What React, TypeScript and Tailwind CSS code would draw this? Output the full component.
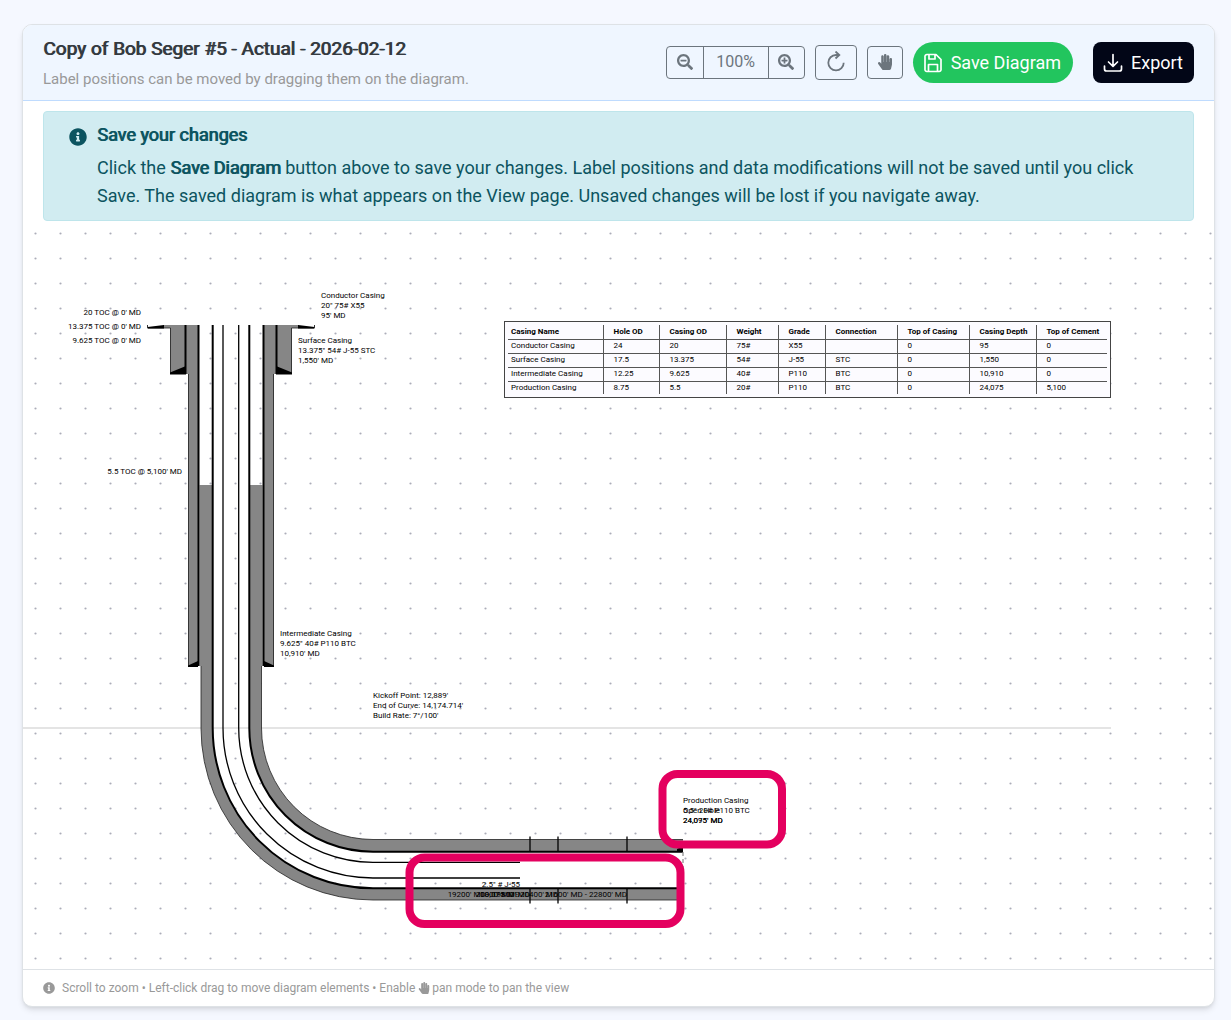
import { FaHandPaper, FaInfoCircle, FaSearchMinus, FaSearchPlus } from 'react-icons/fa';

const columns = [
  { title: 'Casing Name', width: 'w-[95px]' },
  { title: 'Hole OD', width: 'w-[56px]' },
  { title: 'Casing OD', width: 'w-[67px]' },
  { title: 'Weight', width: 'w-[52px]' },
  { title: 'Grade', width: 'w-[47px]' },
  { title: 'Connection', width: 'w-[72px]' },
  { title: 'Top of Casing', width: 'w-[72px]' },
  { title: 'Casing Depth', width: 'w-[67px]' },
  { title: 'Top of Cement', width: 'w-[71px]' },
];

const casings = [
  ['Conductor Casing', '24', '20', '75#', 'X55', '', '0', '95', '0'],
  ['Surface Casing', '17.5', '13.375', '54#', 'J-55', 'STC', '0', '1,550', '0'],
  ['Intermediate Casing', '12.25', '9.625', '40#', 'P110', 'BTC', '0', '10,910', '0'],
  ['Production Casing', '8.75', '5.5', '20#', 'P110', 'BTC', '0', '24,075', '5,100'],
];

type Label = { x: number; y: number; end?: boolean; lines: string[] };

const labels: Label[] = [
  { x: 118, y: 94, end: true, lines: ["20 TOC @ 0' MD"] },
  { x: 118, y: 108, end: true, lines: ["13.375 TOC @ 0' MD"] },
  { x: 118, y: 122, end: true, lines: ["9.625 TOC @ 0' MD"] },
  { x: 159, y: 253, end: true, lines: ["5.5 TOC @ 5,100' MD"] },
  { x: 298, y: 77, lines: ['Conductor Casing', '20" 75# X55', "95' MD"] },
  { x: 275, y: 122, lines: ['Surface Casing', '13.375" 54# J-55 STC', "1,550' MD"] },
  { x: 257, y: 415, lines: ['Intermediate Casing', '9.625" 40# P110 BTC', "10,910' MD"] },
  { x: 350, y: 477, lines: ["Kickoff Point: 12,889'", "End of Curve: 14,174.714'", "Build Rate: 7°/100'"] },
  { x: 660, y: 582, lines: ['Production Casing', '5.5" 20# P110 BTC', "24,075' MD"] },
  { x: 660, y: 592, lines: ['Open Hole', "24,095' MD"] },
  { x: 497, y: 666, end: true, lines: ['2.5" # J-55', "18,075' MD"] },
  { x: 507, y: 676, end: true, lines: ["19200' MD - 19800' MD"] },
  { x: 535, y: 676, end: true, lines: ["20000' MD - 20400' MD"] },
  { x: 604, y: 676, end: true, lines: ["21600' MD - 22800' MD"] },
];

function DiagramLabel({ x, y, end, lines }: Label) {
  return (
    <text textAnchor={end ? 'end' : 'start'} className="cursor-move fill-black text-[8px]">
      {lines.map((line, i) => (
        <tspan key={line} x={x} y={y + i * 10}>{line}</tspan>
      ))}
    </text>
  );
}

function WellDrawing() {
  return (
    <svg className="block h-[748px] w-full" role="img" aria-label="Wellbore diagram">
      <defs>
        <pattern id="grid" width="25" height="25" patternUnits="userSpaceOnUse">
          <circle cx="12.5" cy="12.5" r="1.1" fill="#acadb9" />
        </pattern>
      </defs>
      <rect width="100%" height="100%" fill="url(#grid)" />

      {/* Kickoff depth */}
      <path d="M0 507H1088" stroke="#e4e4e4" strokeWidth="2" />

      {/* Cement */}
      <g fill="#868686">
        <path d="M140 104H163V107H140ZM253 104H276V107H253Z" />
        <path d="M147 104V153H163V104ZM269 104V153H253V104Z" />
        <path d="M163 104V153H165V445H175V104ZM253 104V153H251V445H241V104Z" />
        <path d="M176.500 264H189.500V507A160.500 160.500 0 0 0 350 667.500H660V679H350A172 172 0 0 1 178 507V445H176.500Z" />
        <path d="M239.500 264H226.500V507A123.500 123.500 0 0 0 350 630.500H660V618.500H350A111.500 111.500 0 0 1 238.500 507V445H239.500Z" />
      </g>

      {/* Hole walls */}
      <g fill="none" stroke="#222" strokeWidth=".8">
        <path d="M125 107H147.500V153M291 107H268.500V153M165.500 153V445M250.500 153V445" />
        <path d="M178 445V507A172 172 0 0 0 350 679H660M238.500 445V507A111.500 111.500 0 0 0 350 618.500H660" />
      </g>

      {/* Casing strings */}
      <g fill="none" stroke="#000" strokeWidth="2">
        <path d="M162.500 104V153M253.500 104V153" />
        <path d="M175.500 104V445M240.500 104V445" />
        <path d="M189.700 104V507A160.300 160.300 0 0 0 350 667.300H660" />
        <path d="M226.300 104V507A123.700 123.700 0 0 0 350 630.700H660" />
        <path d="M200 104V507A150 150 0 0 0 350 657H497M215.700 104V507A134.300 134.300 0 0 0 350 641.300H497" strokeWidth="1.3" />
        <path d="M507 615.500V631M535 615.500V631M604 615.500V631M507 667V682.500M535 667V682.500M604 667V682.500" strokeWidth="1.3" />
        <path d="M660 631V667" stroke="#888" strokeWidth="1.2" strokeDasharray="4 3" />
      </g>

      {/* Casing shoes */}
      <path d="M124.500 107.500V106L141 104V107.500ZM291.500 107.500V106L275 104V107.500ZM147 153V151.500L163 145V153.500H147ZM269 153V151.500L253 145V153.500H269ZM165 446V444.500L175 440V446ZM251 446V444.500L241 440V446ZM654 631V628L660 625V631Z" />
      <path d="M124.500 104V107M291.500 104V107" stroke="#333" />

      {labels.map((label) => (
        <DiagramLabel key={label.lines.join()} {...label} />
      ))}

      {/* Markup */}
      <g fill="none" stroke="#e4005f" strokeWidth="8">
        <rect x="639.500" y="553" width="119.500" height="70.500" rx="15" />
        <rect x="386.500" y="636.500" width="271" height="66.500" rx="15" />
      </g>
    </svg>
  );
}

function CasingTable() {
  return (
    <div className="absolute top-[100px] left-[481px] border border-[#444] bg-[#fcfbff] p-[3px]">
      <table className="w-[599px] table-fixed border-collapse text-left text-[8px] leading-[10px] text-black">
        <thead>
          <tr className="h-[14px] border-b border-[#555]">
            {columns.map((col) => (
              <th key={col.title} className={`${col.width} border-l border-[#555] p-0 pt-px pl-[10px] font-bold whitespace-nowrap first:border-l-0 first:pl-[3px]`}>
                {col.title}
              </th>
            ))}
          </tr>
        </thead>
        <tbody>
          {casings.map((row) => (
            <tr key={row[0]} className="h-[14px] border-b border-[#555] last:h-[13px] last:border-b-0">
              {row.map((cell, i) => (
                <td key={columns[i].title} className="border-l border-[#555] p-0 pl-[10px] whitespace-nowrap first:border-l-0 first:pl-[3px]">
                  {cell}
                </td>
              ))}
            </tr>
          ))}
        </tbody>
      </table>
    </div>
  );
}

export default function App() {
  return (
    <div className="min-h-screen bg-[#f5f8ff] pt-6 pr-4 pb-3 pl-[22px] font-[Roboto,sans-serif]">
      <div className="overflow-hidden rounded-[10px] border border-[#dee2e6] bg-white shadow-md">
        {/* Header */}
        <header className="flex items-center justify-between border-b border-[#bfdbfe] bg-[#eff6ff] px-5 py-[10px]">
          <div>
            <h1 className="text-[19px] leading-[27px] font-normal text-[#343a40] [text-shadow:1px_0_currentColor]">Copy of Bob Seger #5 - Actual - 2026-02-12</h1>
            <p className="mt-[6px] text-[15px] leading-[22px] text-[#999]">Label positions can be moved by dragging them on the diagram.</p>
          </div>
          <div className="flex items-center gap-[10px] text-[#6c757d]">
            <div className="flex h-[33px] rounded border border-[#6c757d]">
              <button aria-label="Zoom out" className="flex w-[37px] items-center justify-center border-r border-[#6c757d] pb-[2px]">
                <FaSearchMinus className="h-4 w-4" />
              </button>
              <button className="w-16 pb-[2px] text-base">100%</button>
              <button aria-label="Zoom in" className="flex w-9 items-center justify-center border-l border-[#6c757d] pb-[2px]">
                <FaSearchPlus className="h-4 w-4" />
              </button>
            </div>
            <button aria-label="Reset view" className="flex h-[35px] w-[42px] items-center justify-center rounded border border-[#6c757d]">
              <svg viewBox="0 0 24 24" className="h-6 w-6" fill="none" stroke="currentColor" strokeWidth="1.8">
                <path d="M15.500 4H12A7.700 7.700 0 1 0 19.700 11.700M11.500 .500L15.300 4L11.500 7.500" />
              </svg>
            </button>
            <button aria-label="Pan" className="flex h-[33px] w-9 items-center justify-center rounded border border-[#6c757d] pb-[2px]">
              <FaHandPaper className="h-4 w-4" />
            </button>
            <button className="mr-[10px] flex h-[41px] items-center gap-2 rounded-full bg-[#22c55e] pr-3 pl-[10px] text-lg text-white">
              <svg viewBox="0 0 20 20" className="h-5 w-5" fill="none" stroke="currentColor" strokeWidth="1.7" strokeLinejoin="round">
                <path d="M4 1.500H13L18 6.500V16A2 2 0 0 1 16 18.500H4A2 2 0 0 1 2 16V4A2 2 0 0 1 4 1.500ZM5.500 18V11.500H14.500V18M6 2V6H12V2" />
              </svg>
              Save Diagram
            </button>
            <button className="flex h-[41px] items-center gap-2 rounded-lg bg-[#020617] pr-[11px] pl-[10px] text-lg text-white">
              <svg viewBox="0 0 20 20" className="h-5 w-5" fill="none" stroke="currentColor" strokeWidth="1.7" strokeLinecap="round" strokeLinejoin="round">
                <path d="M10 1.500V13M5.500 9L10 13.300L14.500 9M1.500 13V16A2 2 0 0 0 3.500 18H16.500A2 2 0 0 0 18.500 16V13" />
              </svg>
              Export
            </button>
          </div>
        </header>

        {/* Save reminder */}
        <div className="mx-5 mt-[10px] flex gap-[10px] rounded border border-[#bee5eb] bg-[#d1ecf1] pt-[9px] pr-5 pb-[10px] pl-[25px] text-lg text-[#0c5460]">
          <FaInfoCircle className="mt-[7px] h-[18px] w-[18px] shrink-0" />
          <div className="leading-7">
            <h2 className="mb-[5px] font-normal [text-shadow:1px_0_currentColor]">Save your changes</h2>
            <p>
              Click the <strong className="font-normal [text-shadow:1px_0_currentColor]">Save Diagram</strong> button above to save your changes. Label positions and data modifications will not be saved until you click Save. The saved diagram is what appears on the View page. Unsaved changes will be lost if you navigate away.
            </p>
          </div>
        </div>

        {/* Canvas */}
        <div className="relative overflow-hidden">
          <WellDrawing />
          <CasingTable />
        </div>

        <footer className="flex items-center border-t border-[#dee2e6] px-5 py-2 text-xs leading-5 text-[#999]">
          <FaInfoCircle className="mr-[7px] h-3 w-3" />
          Scroll to zoom • Left-click drag to move diagram elements • Enable
          <FaHandPaper className="mr-[2px] ml-[3px] h-3 w-3" />
          pan mode to pan the view
        </footer>
      </div>
    </div>
  );
}
